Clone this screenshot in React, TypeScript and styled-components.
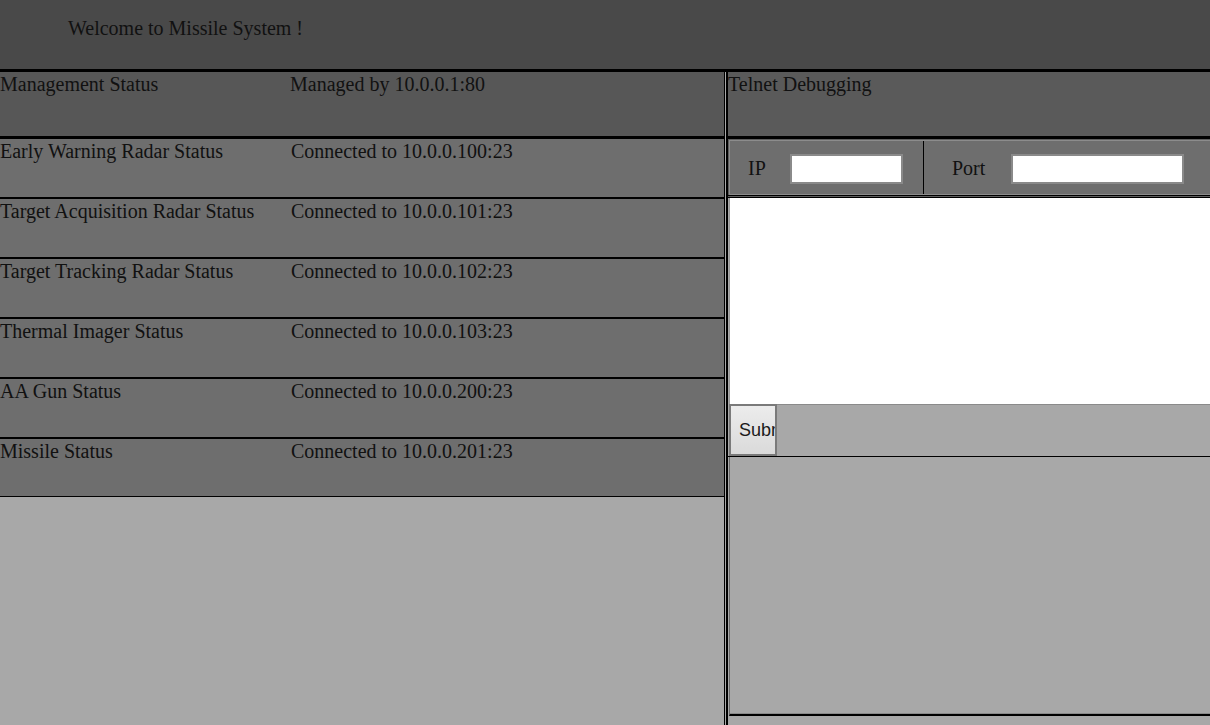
import React from 'react';
import styled, { createGlobalStyle } from 'styled-components';

// Types
interface Device {
  id: string;
  label: string;
  address: string;
}

const GlobalStyle = createGlobalStyle`
  html, body {
    margin: 0;
    padding: 0;
    background: #a8a8a8;
  }
  body {
    font-family: 'Liberation Serif', 'Times New Roman', serif;
    font-size: 20px;
    color: #111;
  }
  * {
    box-sizing: border-box;
  }
`;

// Styled Components
const PageWrapper = styled.div`
  min-height: 725px;
  display: flex;
  flex-direction: column;
`;

const Header = styled.header`
  height: 69px;
  background: #494949;
  padding: 17px 0 0 68px;
  line-height: 23px;
`;

const Main = styled.main`
  flex: 1;
  display: flex;
  border-top: 3px solid #000;
  background: #a8a8a8;
`;

const LeftColumn = styled.section`
  flex: 0 0 725px;
  border-right: 1px solid #000;
`;

const StatusRow = styled.div<{ $tone: 'dark' | 'mid'; $height: number; $border: string }>`
  display: grid;
  grid-template-columns: ${(p) => (p.$tone === 'dark' ? '290px' : '291px')} 1fr;
  height: ${(p) => p.$height}px;
  background: ${(p) => (p.$tone === 'dark' ? '#575757' : '#6e6e6e')};
  border-bottom: ${(p) => p.$border};
  line-height: 23px;
  padding-top: 1px;
  white-space: nowrap;
`;

const RightPanel = styled.section`
  flex: 1;
  margin-left: 1px;
  border-left: 2px solid #000;
  display: flex;
  flex-direction: column;
`;

const TelnetHeader = styled.div`
  height: 67px;
  background: #5a5a5a;
  border-bottom: 3px solid #000;
  line-height: 23px;
  padding-top: 1px;
`;

const ConnWrap = styled.div`
  padding: 1px 0 0 1px;
  border-bottom: 3px double #000;
  background: #5e5e5e;
`;

const ConnBox = styled.div`
  display: grid;
  grid-template-columns: 194px 1fr;
  height: 55px;
  background: #6e6e6e;
  border: 1px solid #8c8c8c;
  border-right: none;
`;

const ConnCell = styled.label<{ $divider?: boolean; $pad: number }>`
  display: flex;
  align-items: center;
  padding: 2px 0 0 ${(p) => p.$pad}px;
  border-right: ${(p) => (p.$divider ? '1px solid #000' : 'none')};
`;

const FieldLabel = styled.span<{ $width: number }>`
  width: ${(p) => p.$width}px;
  line-height: 23px;
`;

const TextField = styled.input<{ $width: number }>`
  width: ${(p) => p.$width}px;
  height: 30px;
  border: 2px solid #8a8a8a;
  background: #fff;
  padding: 0 4px;
  font: 16px 'Liberation Sans', Arial, sans-serif;
  outline: none;
`;

const CommandArea = styled.textarea`
  display: block;
  width: calc(100% - 1px);
  margin-left: 1px;
  height: 207px;
  border: none;
  border-left: 1px solid #9a9a9a;
  border-bottom: 1px solid #8a8a8a;
  background: #fff;
  resize: none;
  outline: none;
  font: 16px 'Liberation Mono', monospace;
`;

const ButtonRow = styled.div`
  height: 52px;
  padding-left: 1px;
  background: #a8a8a8;
  border-bottom: 1px solid #000;
`;

const SubmitButton = styled.button`
  width: 48px;
  height: 52px;
  margin-top: -1px;
  padding: 0 0 0 8px;
  border: 2px solid #7a7a7a;
  background: linear-gradient(#ececec, #dadada);
  font: 18px 'Liberation Sans', Arial, sans-serif;
  color: #1a1a1a;
  text-align: left;
  white-space: nowrap;
  overflow: hidden;
`;

const OutputBox = styled.div`
  height: 259px;
  margin-left: 1px;
  background: #a8a8a8;
  border-left: 1px solid #6a6a6a;
  border-bottom: 2px solid #000;
  box-shadow: inset 0 -1px 0 #8a8a8a;
`;

const devices: Device[] = [
  { id: 'ewr', label: 'Early Warning Radar Status', address: 'Connected to 10.0.0.100:23' },
  { id: 'tar', label: 'Target Acquisition Radar Status', address: 'Connected to 10.0.0.101:23' },
  { id: 'ttr', label: 'Target Tracking Radar Status', address: 'Connected to 10.0.0.102:23' },
  { id: 'thermal', label: 'Thermal Imager Status', address: 'Connected to 10.0.0.103:23' },
  { id: 'aagun', label: 'AA Gun Status', address: 'Connected to 10.0.0.200:23' },
  { id: 'missile', label: 'Missile Status', address: 'Connected to 10.0.0.201:23' },
];

// Page Component
export default function App() {
  return (
    <PageWrapper>
      <GlobalStyle />
      <Header>Welcome to Missile System !</Header>

      <Main>
        <LeftColumn>
          <StatusRow $tone="dark" $height={67} $border="3px solid #000">
            <span>Management Status</span>
            <span>Managed by 10.0.0.1:80</span>
          </StatusRow>
          {devices.map((d, i) => (
            <StatusRow
              key={d.id}
              $tone="mid"
              $height={i === devices.length - 1 ? 58 : 60}
              $border={i === devices.length - 1 ? '1px solid #000' : '2px solid #000'}
            >
              <span>{d.label}</span>
              <span>{d.address}</span>
            </StatusRow>
          ))}
        </LeftColumn>

        <RightPanel>
          <TelnetHeader>Telnet Debugging</TelnetHeader>
          <ConnWrap>
            <ConnBox>
              <ConnCell $divider $pad={18}>
                <FieldLabel $width={42}>IP</FieldLabel>
                <TextField $width={113} />
              </ConnCell>
              <ConnCell $pad={28}>
                <FieldLabel $width={59}>Port</FieldLabel>
                <TextField $width={173} />
              </ConnCell>
            </ConnBox>
          </ConnWrap>
          <CommandArea />
          <ButtonRow>
            <SubmitButton>Submit</SubmitButton>
          </ButtonRow>
          <OutputBox />
        </RightPanel>
      </Main>
    </PageWrapper>
  );
}
